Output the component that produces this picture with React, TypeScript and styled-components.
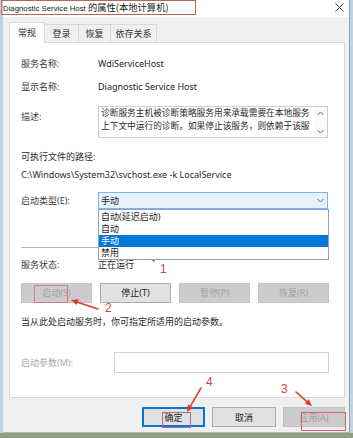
import * as React from 'react';
import styled, { createGlobalStyle } from 'styled-components';

const GlobalStyle = createGlobalStyle`
  html, body {
    margin: 0;
    padding: 0;
  }
  body {
    font-family: "Noto Sans", "Noto Sans CJK SC", sans-serif;
    font-size: 9px;
    color: #222;
  }
  * {
    box-sizing: border-box;
  }
`;

const tabs = [
  { name: '常规', w: 36, active: true },
  { name: '登录', w: 35 },
  { name: '恢复', w: 33 },
  { name: '依存关系', w: 47 },
];

const options = ['自动(延迟启动)', '自动', '手动', '禁用'];

const Chevron = ({ up }: { up?: boolean }) => (
  <svg width="7" height="5" viewBox="0 0 7 5">
    <polyline
      points={up ? '0.5,4 3.5,1 6.5,4' : '0.5,1 3.5,4 6.5,1'}
      fill="none"
      stroke="#6a6a6a"
      strokeWidth="1"
    />
  </svg>
);

const Arrow = ({ x1, y1, x2, y2 }: { x1: number; y1: number; x2: number; y2: number }) => {
  const a = Math.atan2(y2 - y1, x2 - x1);
  const len = 7;
  const w = 3;
  const bx = x2 - Math.cos(a) * len;
  const by = y2 - Math.sin(a) * len;
  const px = -Math.sin(a) * w;
  const py = Math.cos(a) * w;
  return (
    <g>
      <line x1={x1} y1={y1} x2={bx} y2={by} stroke="#e2382c" strokeWidth="1.5" strokeLinecap="round" />
      <polygon points={`${x2},${y2} ${bx + px},${by + py} ${bx - px},${by - py}`} fill="#e2382c" />
    </g>
  );
};

const App = () => {
  return (
    <Desktop>
      <GlobalStyle />
      <Window>
        <TitleBar>
          <TitleText>
            Diagnostic Service Host <Cjk>的属性(本地计算机)</Cjk>
          </TitleText>
          <svg width="9" height="9" viewBox="0 0 9 9">
            <path d="M0.5 0.5 L8.5 8.5 M8.5 0.5 L0.5 8.5" stroke="#333" strokeWidth="1" />
          </svg>
        </TitleBar>
        <Body>
          <TabRow>
            {tabs.map((t) => (
              <Tab key={t.name} $active={!!t.active} $w={t.w}>
                {t.name}
              </Tab>
            ))}
          </TabRow>
          <Panel>
            <Row $mt={0}>
              <Label>服务名称:</Label>
              <Value>WdiServiceHost</Value>
            </Row>
            <Row $mt={11}>
              <Label>显示名称:</Label>
              <Value>Diagnostic Service Host</Value>
            </Row>
            <Row $mt={13} $align="start">
              <Label $top={5}>描述:</Label>
              <DescBox>
                <DescText>
                  <div>诊断服务主机被诊断策略服务用来承载需要在本地服务</div>
                  <div>上下文中运行的诊断。如果停止该服务，则依赖于该服</div>
                </DescText>
                <ScrollBar>
                  <Chevron up />
                  <Chevron />
                </ScrollBar>
              </DescBox>
            </Row>
            <Line $mt={13}>可执行文件的路径:</Line>
            <Line $mt={6}>{'C:\\Windows\\System32\\svchost.exe -k LocalService'}</Line>
            <Row $mt={11}>
              <Label>启动类型(E):</Label>
              <Combo>
                <span>手动</span>
                <Chevron />
                <DropList>
                  {options.map((o) => (
                    <Option key={o} $selected={o === '手动'}>
                      {o}
                    </Option>
                  ))}
                </DropList>
              </Combo>
            </Row>
            <Separator />
            <Row $mt={11}>
              <Label>服务状态:</Label>
              <Value>正在运行</Value>
            </Row>
            <ButtonGrid>
              <Button $disabled>启动(S)</Button>
              <Button>停止(T)</Button>
              <Button $disabled>暂停(P)</Button>
              <Button $disabled>恢复(R)</Button>
            </ButtonGrid>
            <Line $mt={13}>当从此处启动服务时，你可指定所适用的启动参数。</Line>
            <Row $mt={24} $label={93}>
              <Label $disabled>启动参数(M):</Label>
              <Input />
            </Row>
          </Panel>
          <Footer>
            <Button $primary $w={63}>
              确定
            </Button>
            <Button $w={64}>取消</Button>
            <Button $disabled $w={62}>
              应用(A)
            </Button>
          </Footer>
        </Body>
      </Window>
      <Overlay width="353" height="438" viewBox="0 0 353 438">
        <rect x="1.5" y="0.5" width="194" height="14" fill="none" stroke="#b5655f" strokeWidth="1" />
        <rect x="34.5" y="285.5" width="33" height="17" fill="none" stroke="#e07a80" strokeWidth="1" />
        <rect x="162.5" y="412.5" width="28" height="15" fill="none" stroke="#b86a8a" strokeWidth="1" />
        <rect x="301.5" y="412.5" width="44" height="18" fill="none" stroke="#d9606c" strokeWidth="1" />
        <Arrow x1={154} y1={261} x2={136} y2={249} />
        <Arrow x1={98} y1={309} x2={71} y2={300} />
        <Arrow x1={296} y1={392} x2={312} y2={406} />
        <Arrow x1={201} y1={388} x2={187} y2={412} />
        <Num x="160" y="273">1</Num>
        <Num x="105" y="312">2</Num>
        <Num x="281" y="393">3</Num>
        <Num x="206" y="386">4</Num>
      </Overlay>
    </Desktop>
  );
};

const Desktop = styled.div`
  position: relative;
  width: 353px;
  height: 438px;
  padding-left: 3px;
  overflow: hidden;
  background: linear-gradient(to bottom, #c4d2df 0, #c4d2df 433px, #8ea27c 433px);
`;
const Window = styled.div`
  width: 347px;
  height: 433px;
  background: #f0f0f0;
  border-right: 1px solid #8fa2b5;
  border-bottom: 1px solid #a9b6c2;
  display: flex;
  flex-direction: column;
`;
const TitleBar = styled.div`
  height: 17px;
  background: #fff;
  display: flex;
  align-items: center;
  justify-content: space-between;
  padding: 0 5px 2px 0;
`;
const TitleText = styled.div`
  font-family: "Liberation Sans", "Noto Sans CJK SC", sans-serif;
  font-size: 7.8px;
  color: #222;
  white-space: nowrap;
  line-height: 12px;
`;
const Cjk = styled.span`
  font-family: "Noto Sans CJK SC", sans-serif;
  font-size: 9.3px;
`;
const Body = styled.div`
  flex: 1;
  padding: 5px 4px 0 6px;
  display: flex;
  flex-direction: column;
`;
const TabRow = styled.div`
  display: flex;
  align-items: flex-end;
  height: 20px;
`;
const Tab = styled.div<{ $active: boolean; $w: number }>`
  width: ${({ $w }) => $w}px;
  height: ${({ $active }) => ($active ? 21 : 18)}px;
  margin-bottom: ${({ $active }) => ($active ? -1 : 0)}px;
  position: ${({ $active }) => ($active ? 'relative' : 'static')};
  z-index: ${({ $active }) => ($active ? 1 : 0)};
  background: ${({ $active }) => ($active ? '#fff' : '#f0f0f0')};
  border: 1px solid #d9d9d9;
  border-bottom: none;
  margin-left: ${({ $active }) => ($active ? 0 : -1)}px;
  display: flex;
  align-items: center;
  justify-content: center;
  font-size: 9px;
  color: #333;
  padding-bottom: ${({ $active }) => ($active ? 2 : 0)}px;
`;
const Panel = styled.div`
  height: 356px;
  background: #fff;
  border: 1px solid #d9d9d9;
  padding: 15px 15px 0 11px;
  line-height: 12px;
`;
const Row = styled.div<{ $mt: number; $align?: string; $label?: number }>`
  display: grid;
  grid-template-columns: ${({ $label }) => $label ?? 77}px 1fr;
  align-items: ${({ $align }) => $align ?? 'center'};
  margin-top: ${({ $mt }) => $mt}px;
`;
const Label = styled.div<{ $top?: number; $disabled?: boolean }>`
  color: ${({ $disabled }) => ($disabled ? '#a8a8a8' : '#3a3a3a')};
  margin-top: ${({ $top }) => $top ?? 0}px;
  white-space: nowrap;
`;
const Value = styled.div`
  color: #222;
  white-space: nowrap;
`;
const Line = styled.div<{ $mt: number }>`
  margin-top: ${({ $mt }) => $mt}px;
  color: #2a2a2a;
  white-space: nowrap;
`;
const DescBox = styled.div`
  display: flex;
  height: 32px;
  width: 230px;
  border: 1px solid #cdcdcd;
`;
const DescText = styled.div`
  flex: 1;
  padding: 0 0 0 2px;
  font-size: 8.7px;
  line-height: 13px;
  white-space: nowrap;
  overflow: hidden;
  color: #2a2a2a;
`;
const ScrollBar = styled.div`
  width: 13px;
  display: flex;
  flex-direction: column;
  align-items: center;
  justify-content: space-between;
  padding: 4px 0 3px;
  background: #fafafa;
`;
const Combo = styled.div`
  position: relative;
  height: 17px;
  width: 230px;
  border: 1px solid #7eb4ea;
  background: #e5f1fb;
  display: flex;
  align-items: center;
  justify-content: space-between;
  padding: 0 3px 0 2px;
  color: #222;
`;
const DropList = styled.div`
  position: absolute;
  top: calc(100% + 1px);
  left: -1px;
  width: 231px;
  background: #fff;
  border: 1px solid #8aa3bf;
  padding: 1px 0 0;
  z-index: 2;
`;
const Option = styled.div<{ $selected: boolean }>`
  height: 12px;
  line-height: 12px;
  padding-left: 2px;
  background: ${({ $selected }) => ($selected ? '#0078d7' : '#fff')};
  color: ${({ $selected }) => ($selected ? '#fff' : '#222')};
`;
const Separator = styled.div`
  margin-top: 38px;
  height: 1px;
  background: #b4b4b4;
`;
const ButtonGrid = styled.div`
  display: grid;
  grid-template-columns: repeat(4, 71px);
  column-gap: 8px;
  margin-top: 12px;
`;
const Button = styled.div<{ $disabled?: boolean; $primary?: boolean; $w?: number }>`
  position: relative;
  height: 20px;
  width: ${({ $w }) => ($w ? `${$w}px` : 'auto')};
  display: flex;
  align-items: center;
  justify-content: center;
  font-size: 9px;
  background: ${({ $disabled }) => ($disabled ? '#cccccc' : '#e1e1e1')};
  border: 1px solid ${({ $disabled, $primary }) => ($primary ? '#0078d7' : $disabled ? '#c4c4c4' : '#adadad')};
  box-shadow: ${({ $primary }) => ($primary ? 'inset 0 0 0 1px #0078d7' : 'none')};
  color: ${({ $disabled }) => ($disabled ? '#a2a2a2' : '#222')};
`;
const Input = styled.div`
  height: 21px;
  border: 1px solid #d0d0d0;
  background: #fff;
`;
const Footer = styled.div`
  display: flex;
  justify-content: flex-end;
  gap: 7px;
  margin-top: 9px;
`;
const Overlay = styled.svg`
  position: absolute;
  top: 0;
  left: 0;
  pointer-events: none;
`;
const Num = styled.text`
  font-family: "Liberation Sans", sans-serif;
  font-size: 12px;
  fill: #d2453c;
`;

export default App;
